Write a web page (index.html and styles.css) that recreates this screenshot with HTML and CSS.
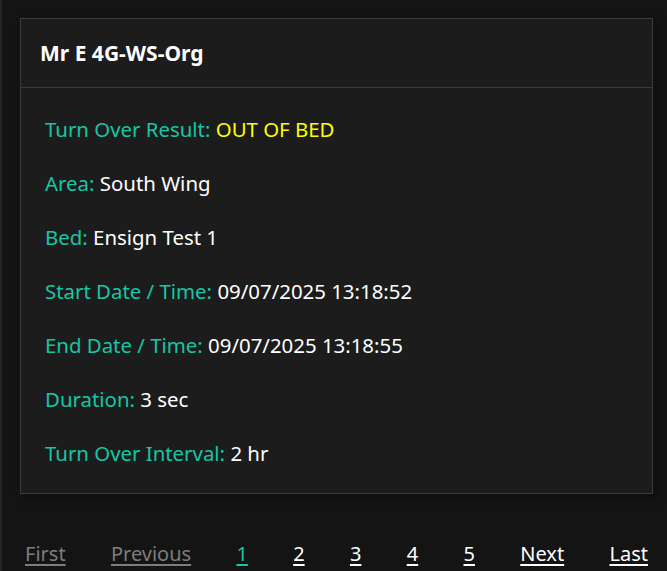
FILE: index.html
```html
<!DOCTYPE html>
<html>
<head>
<meta charset="utf-8">
<link rel="stylesheet" href="styles.css">
</head>
<body>
<div class="page">
  <section class="card">
    <header class="card-header">Mr E 4G-WS-Org</header>
    <div class="card-body">
      <div class="row"><span class="label">Turn Over Result:</span> <span class="value warn">OUT OF BED</span></div>
      <div class="row"><span class="label">Area:</span> <span class="value">South Wing</span></div>
      <div class="row"><span class="label">Bed:</span> <span class="value">Ensign Test 1</span></div>
      <div class="row"><span class="label">Start Date / Time:</span> <span class="value">09/07/2025 13:18:52</span></div>
      <div class="row"><span class="label">End Date / Time:</span> <span class="value">09/07/2025 13:18:55</span></div>
      <div class="row"><span class="label">Duration:</span> <span class="value">3 sec</span></div>
      <div class="row"><span class="label">Turn Over Interval:</span> <span class="value">2 hr</span></div>
    </div>
  </section>
  <nav class="pager">
    <a class="pg disabled">First</a>
    <a class="pg disabled">Previous</a>
    <a class="pg active">1</a>
    <a class="pg">2</a>
    <a class="pg">3</a>
    <a class="pg">4</a>
    <a class="pg">5</a>
    <a class="pg">Next</a>
    <a class="pg">Last</a>
  </nav>
</div>
</body>
</html>
```

FILE: styles.css
```css
html, body {
  margin: 0;
  padding: 0;
  background: #141414;
  height: 100%;
  overflow: hidden;
}
body {
  font-family: "Noto Sans", "Open Sans", sans-serif;
  color: #ffffff;
}
.page {
  border-left: 2px solid #242424;
  min-height: 100%;
  box-sizing: border-box;
  padding: 18px 14px 0 18px;
}
.card {
  width: 633px;
  box-sizing: border-box;
  background: #1c1c1c;
  border: 1px solid #3a3a3a;
  box-shadow: 4px 4px 8px rgba(0,0,0,0.25);
}
.card-header {
  height: 68px;
  display: flex;
  align-items: center;
  padding-left: 19px;
  font-size: 21px;
  font-weight: 700;
  border-bottom: 1px solid #3a3a3a;
}
.card-body {
  padding: 14px 24px 13px 24px;
  display: flex;
  flex-direction: column;
}
.row {
  height: 54px;
  line-height: 54px;
  font-size: 20.4px;
  white-space: nowrap;
}
.label {
  color: #16c6a5;
}
.value {
  color: #ffffff;
}
.value.warn {
  color: #ffff00;
}
.pager {
  display: flex;
  justify-content: space-between;
  padding: 0 5px 0 5px;
  margin-top: 46px;
  font-size: 20px;
  line-height: 28px;
}
.pg {
  color: #ffffff;
  text-decoration: underline;
  text-underline-offset: 3px;
}
.pg.disabled {
  color: #7d7d7d;
}
.pg.active {
  color: #16c6a5;
}
```
